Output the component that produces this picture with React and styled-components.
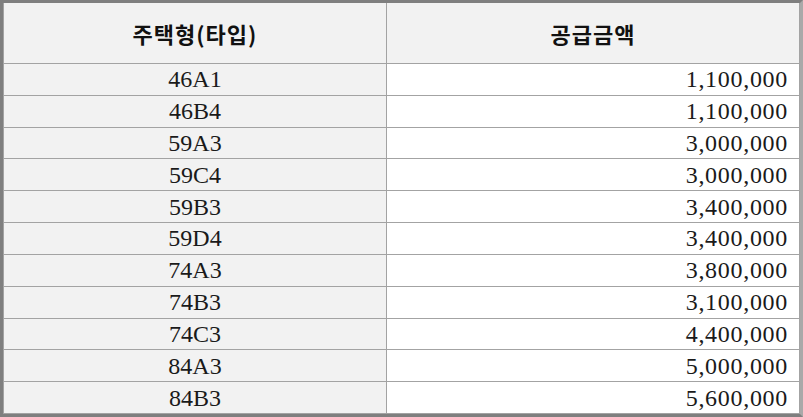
import React from 'react'
import styled, { createGlobalStyle } from 'styled-components'

const rows = [
    ['46A1', '1,100,000'],
    ['46B4', '1,100,000'],
    ['59A3', '3,000,000'],
    ['59C4', '3,000,000'],
    ['59B3', '3,400,000'],
    ['59D4', '3,400,000'],
    ['74A3', '3,800,000'],
    ['74B3', '3,100,000'],
    ['74C3', '4,400,000'],
    ['84A3', '5,000,000'],
    ['84B3', '5,600,000'],
]

const GlobalStyle = createGlobalStyle`
    html, body {
        margin: 0;
        padding: 0;
        background: #ffffff;
        overflow: hidden;
    }
`

const Frame = styled.div`
    box-sizing: border-box;
    width: 803px;
    height: 417px;
    border: 3px solid #7f7f7f;
    border-right-color: #a9a9a9;
    background: #ffffff;
`

const Table = styled.table`
    width: 100%;
    height: 100%;
    border-collapse: collapse;
    table-layout: fixed;
`

const HeadCell = styled.th`
    height: 60px;
    padding: 0;
    background: #f2f2f2;
    border: 1px solid #a3a3a3;
    border-top: none;
    color: #111111;
    font-family: "Noto Sans CJK KR", "Noto Sans", sans-serif;
    font-size: 22px;
    font-weight: 700;
    letter-spacing: 1px;
    text-align: center;
    vertical-align: middle;
`

const Cell = styled.td`
    height: 30.8px;
    padding: 0 ${p => (p.$num ? '11px' : '0')} 0 0;
    background: ${p => (p.$num ? '#ffffff' : '#f2f2f2')};
    border: 1px solid #a3a3a3;
    color: #1a1a1a;
    font-family: "Liberation Serif", "DejaVu Serif", serif;
    font-size: 24px;
    letter-spacing: ${p => (p.$num ? '0.7px' : '0')};
    line-height: 1;
    text-align: ${p => (p.$num ? 'right' : 'center')};
    vertical-align: middle;
`

export default function App() {
    return (
        <>
            <GlobalStyle />
            <Frame>
                <Table>
                    <colgroup>
                        <col style={{ width: '383px' }} />
                        <col />
                    </colgroup>
                    <thead>
                        <tr>
                            <HeadCell>주택형(타입)</HeadCell>
                            <HeadCell>공급금액</HeadCell>
                        </tr>
                    </thead>
                    <tbody>
                        {rows.map(([type, price]) => (
                            <tr key={type}>
                                <Cell>{type}</Cell>
                                <Cell $num>{price}</Cell>
                            </tr>
                        ))}
                    </tbody>
                </Table>
            </Frame>
        </>
    )
}
